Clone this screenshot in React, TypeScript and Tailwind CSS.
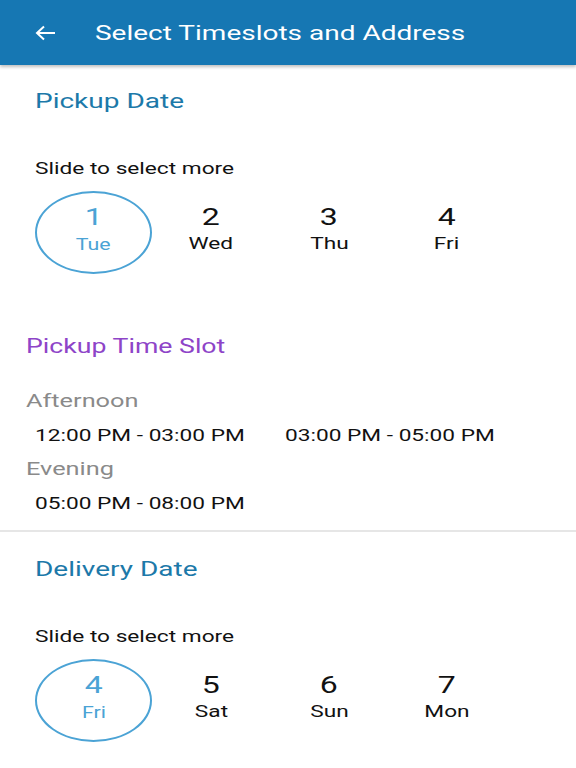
import React from "react";

const T = ({ children, className = "" }: { children: React.ReactNode; className?: string }) => (
  <span className={"inline-block origin-left scale-x-[1.333] whitespace-nowrap " + className}>{children}</span>
);
const C = ({ children, className = "" }: { children: React.ReactNode; className?: string }) => (
  <span className={"inline-block origin-center scale-x-[1.333] whitespace-nowrap " + className}>{children}</span>
);

type D = { n: string; d: string };

const DateRow = ({ days }: { days: D[] }) => (
  <div className="flex pl-[35px]">
    {days.map((x, i) =>
      i === 0 ? (
        <div
          key={i}
          className="w-[117px] h-[83px] rounded-[50%] border-2 border-[#4ba3d5] flex flex-col items-center pt-[10px] text-[#4ba3d5]"
        >
          <C className="text-[24px] leading-[28px]">{x.n}</C>
          <C className="text-[16px] leading-[20px] mt-[4px]">{x.d}</C>
        </div>
      ) : (
        <div key={i} className="w-[118px] flex flex-col items-center pt-[12px] text-[#111]">
          <C className="text-[24px] leading-[28px]">{x.n}</C>
          <C className="text-[17px] leading-[20px] mt-[2px]">{x.d}</C>
        </div>
      )
    )}
  </div>
);

export default function App() {
  return (
    <div className="w-[576px] h-[768px] bg-white overflow-hidden" style={{ fontFamily: "Roboto, 'Noto Sans', sans-serif" }}>
      <div className="h-[65px] bg-[#1677b3] flex items-center shadow-[0_2px_3px_rgba(0,0,0,0.25)] relative z-10">
        <div className="w-[95px] pl-[35px] flex items-center">
          <svg width="21" height="16" viewBox="0 0 21 16" fill="none" stroke="white" strokeWidth="2">
            <path d="M20 8H2" />
            <path d="M9 1.5L2 8l7 6.5" />
          </svg>
        </div>
        <T className="text-white text-[21px] leading-[28px]">Select Timeslots and Address</T>
      </div>

      <div className="pl-[35px] mt-[22px]">
        <T className="text-[#1c79a9] text-[21px] leading-[28px]">Pickup Date</T>
      </div>
      <div className="pl-[35px] mt-[41px]">
        <T className="text-[#111] text-[17px] leading-[24px]">Slide to select more</T>
      </div>
      <div className="mt-[10px]">
        <DateRow days={[{ n: "1", d: "Tue" }, { n: "2", d: "Wed" }, { n: "3", d: "Thu" }, { n: "4", d: "Fri" }]} />
      </div>

      <div className="pl-[26px] mt-[58px]">
        <T className="text-[#8e44c8] text-[20px] leading-[28px]">Pickup Time Slot</T>
      </div>
      <div className="pl-[26px] mt-[27px]">
        <T className="text-[#8a8a8a] text-[19px] leading-[28px]">Afternoon</T>
      </div>
      <div className="pl-[35px] mt-[6px] flex">
        <div className="w-[250px]">
          <T className="text-[#111] text-[17px] leading-[28px]">12:00 PM - 03:00 PM</T>
        </div>
        <T className="text-[#111] text-[17px] leading-[28px]">03:00 PM - 05:00 PM</T>
      </div>
      <div className="pl-[26px] mt-[6px]">
        <T className="text-[#8a8a8a] text-[19px] leading-[28px]">Evening</T>
      </div>
      <div className="pl-[35px] mt-[6px]">
        <T className="text-[#111] text-[17px] leading-[28px]">05:00 PM - 08:00 PM</T>
      </div>

      <div className="mt-[13px] h-[2px] bg-[#e6e6e6]" />

      <div className="pl-[35px] mt-[23px]">
        <T className="text-[#1c79a9] text-[21px] leading-[28px]">Delivery Date</T>
      </div>
      <div className="pl-[35px] mt-[41px]">
        <T className="text-[#111] text-[17px] leading-[24px]">Slide to select more</T>
      </div>
      <div className="mt-[10px]">
        <DateRow days={[{ n: "4", d: "Fri" }, { n: "5", d: "Sat" }, { n: "6", d: "Sun" }, { n: "7", d: "Mon" }]} />
      </div>
    </div>
  );
}
